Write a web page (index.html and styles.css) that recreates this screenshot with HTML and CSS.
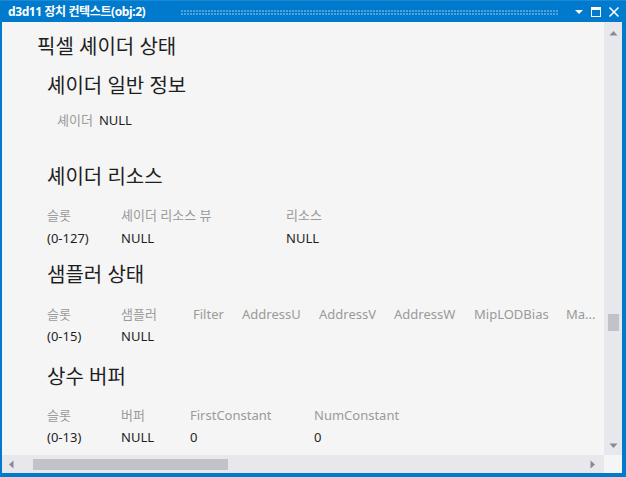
FILE: index.html
```html
<!DOCTYPE html>
<html lang="ko">
<head>
<meta charset="utf-8">
<link rel="stylesheet" href="styles.css">
</head>
<body>
<div class="window">
  <div class="titlebar">
    <span class="title">d3d11 장치 컨텍스트(obj:2)</span>
    <span class="grip"></span>
    <span class="tb-btns">
      <svg width="10" height="10" viewBox="0 0 10 10"><path d="M1 3 H9 L5 7 Z" fill="#fff"/></svg>
      <svg width="12" height="12" viewBox="0 0 12 12"><rect x="1.5" y="1.5" width="9" height="9" fill="none" stroke="#fff"/><rect x="1" y="1" width="10" height="3" fill="#fff"/></svg>
      <svg width="12" height="12" viewBox="0 0 12 12"><path d="M1.5 1.5 L10.5 10.5 M10.5 1.5 L1.5 10.5" stroke="#fff" stroke-width="1.6"/></svg>
    </span>
  </div>
  <div class="body">
    <div class="content">
      <div class="h1">픽셀 셰이더 상태</div>
      <div class="h2 first">셰이더 일반 정보</div>
      <div class="kv"><span class="lbl">셰이더</span><span class="val">NULL</span></div>

      <div class="h2 s2">셰이더 리소스</div>
      <div class="tbl t2">
        <span class="lbl">슬롯</span><span class="lbl">셰이더 리소스 뷰</span><span class="lbl">리소스</span>
        <span class="val">(0-127)</span><span class="val">NULL</span><span class="val">NULL</span>
      </div>

      <div class="h2 s3">샘플러 상태</div>
      <div class="tbl t3">
        <span class="lbl">슬롯</span><span class="lbl">샘플러</span><span class="lbl">Filter</span><span class="lbl">AddressU</span><span class="lbl">AddressV</span><span class="lbl">AddressW</span><span class="lbl">MipLODBias</span><span class="lbl">Ma...</span>
        <span class="val">(0-15)</span><span class="val">NULL</span><span></span><span></span><span></span><span></span><span></span><span></span>
      </div>

      <div class="h2 s4">상수 버퍼</div>
      <div class="tbl t4">
        <span class="lbl">슬롯</span><span class="lbl">버퍼</span><span class="lbl">FirstConstant</span><span class="lbl">NumConstant</span>
        <span class="val">(0-13)</span><span class="val">NULL</span><span class="val">0</span><span class="val">0</span>
      </div>
    </div>
    <div class="vscroll">
      <svg width="9" height="6" viewBox="0 0 9 6"><path d="M0.5 5.5 H8.5 L4.5 1 Z" fill="#868999"/></svg>
      <div class="vtrack"><div class="vthumb"></div></div>
      <svg width="9" height="6" viewBox="0 0 9 6"><path d="M0.5 0.5 H8.5 L4.5 5 Z" fill="#868999"/></svg>
    </div>
    <div class="hscroll">
      <svg width="6" height="9" viewBox="0 0 6 9"><path d="M5.5 0.5 V8.5 L1 4.5 Z" fill="#868999"/></svg>
      <div class="htrack"><div class="hthumb"></div></div>
      <svg width="6" height="9" viewBox="0 0 6 9"><path d="M0.5 0.5 V8.5 L5 4.5 Z" fill="#868999"/></svg>
    </div>
    <div class="corner"></div>
  </div>
</div>
</body>
</html>
```
FILE: styles.css
```css
html, body {
  margin: 0;
  padding: 0;
  background: #007acc;
}
body {
  width: 626px;
  height: 477px;
  overflow: hidden;
  font-family: "Noto Sans", "Noto Sans CJK KR", sans-serif;
}
.window {
  width: 626px;
  height: 477px;
  box-sizing: border-box;
  background: #007acc;
  border-top: 1px solid #1a8ad4;
  padding: 0 4px 4px 2px;
  display: flex;
  flex-direction: column;
}
.titlebar {
  height: 21px;
  display: flex;
  align-items: center;
  color: #fff;
}
.title {
  font-weight: bold;
  font-size: 12px;
  letter-spacing: -0.4px;
  padding-left: 6px;
  line-height: 21px;
}
.grip {
  flex: 1;
  height: 5px;
  margin: 1px 16px 0 36px;
  background-image: radial-gradient(circle at 1px 1px, #4fa3dc 0.8px, transparent 1px);
  background-size: 3px 3px;
}
.tb-btns {
  display: flex;
  align-items: center;
  gap: 6px;
  padding-right: 2px;
}
.body {
  flex: 1;
  display: grid;
  grid-template-columns: 1fr 18px;
  grid-template-rows: 1fr 18px;
  background: #f5f5f5;
  min-height: 0;
}
.content {
  overflow: hidden;
  padding: 11px 0 0 35px;
  color: #1e1e1e;
  white-space: nowrap;
}
.h1 {
  font-size: 20px;
  line-height: 28px;
}
.h2 {
  font-size: 20px;
  line-height: 28px;
  margin-left: 10px;
}
.h2.first { margin-top: 11px; }
.h2.s2 { margin-top: 34px; }
.h2.s3 { margin-top: 14px; }
.h2.s4 { margin-top: 18px; }
.lbl {
  color: #9a9a9a;
  font-size: 13px;
  line-height: 18px;
}
.val {
  color: #1e1e1e;
  font-size: 13px;
  line-height: 18px;
}
.kv {
  margin: 11px 0 0 20px;
  display: flex;
  gap: 6px;
}
.tbl {
  display: grid;
  margin-left: 10px;
  row-gap: 5px;
  margin-top: 15px;
}
.t2 { grid-template-columns: 74px 165px 100px; }
.t3 { grid-template-columns: 74px 72px 49px 77px 75px 80px 92px 60px; margin-top: 16px; row-gap: 4px; }
.t4 { grid-template-columns: 74px 69px 124px 120px; row-gap: 4px; }
.vscroll {
  background: #e8e8ec;
  display: flex;
  flex-direction: column;
  align-items: center;
  padding: 8px 0 6px;
}
.vtrack {
  flex: 1;
  width: 100%;
  position: relative;
}
.vthumb {
  position: absolute;
  left: 4px;
  width: 11px;
  top: 278px;
  height: 17px;
  background: #c2c3c9;
}
.hscroll {
  background: #e8e8ec;
  display: flex;
  align-items: center;
  padding: 0 8px 0 6px;
}
.htrack {
  flex: 1;
  height: 100%;
  position: relative;
}
.hthumb {
  position: absolute;
  left: 19px;
  width: 195px;
  top: 4px;
  height: 11px;
  background: #c2c3c9;
}
.corner {
  background: #f5f5f5;
}
```
